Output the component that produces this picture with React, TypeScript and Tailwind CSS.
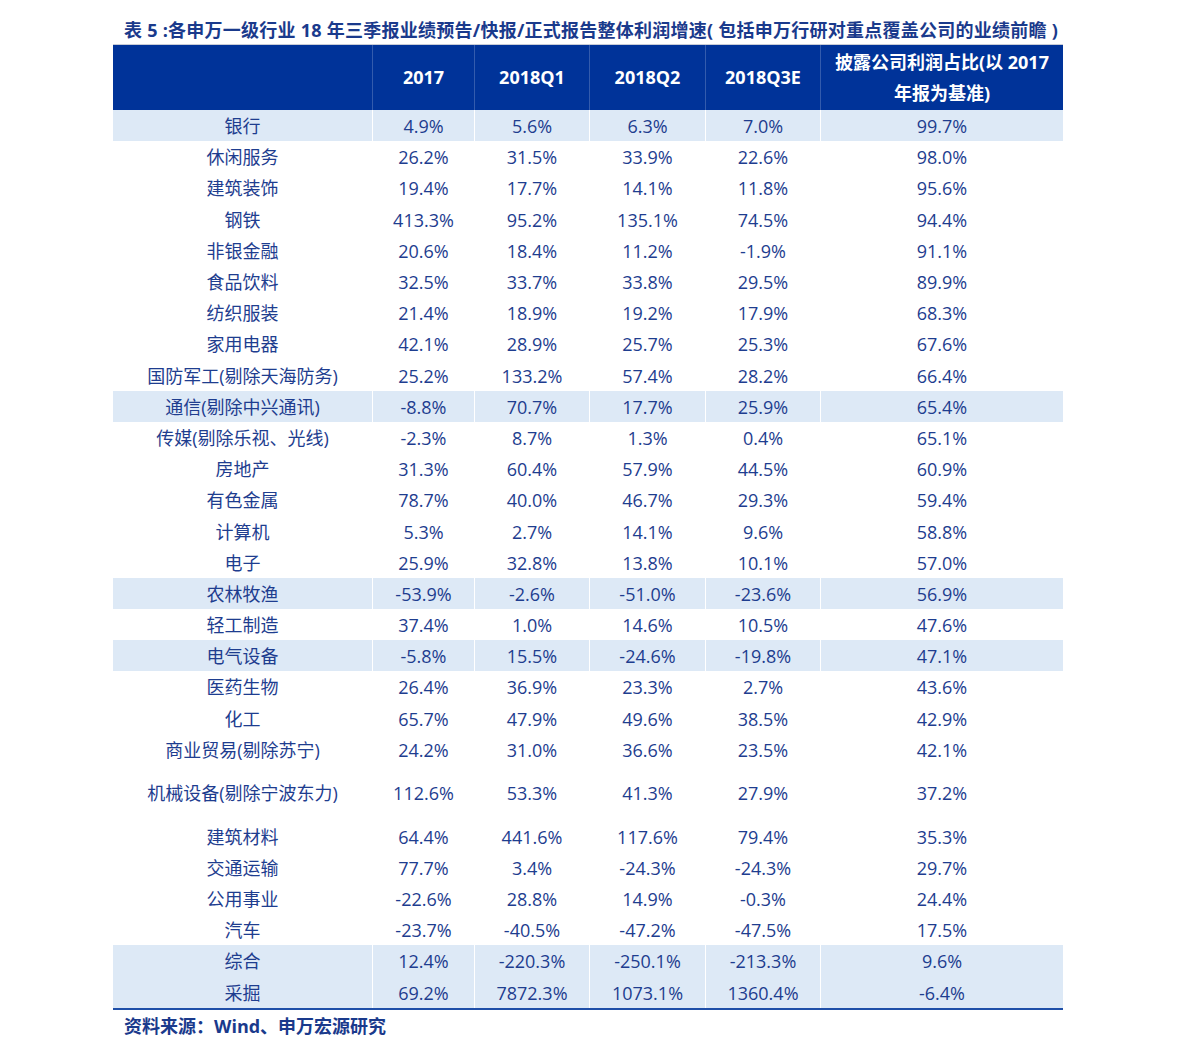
const rows: { name: string; v: string[]; hl?: boolean; tall?: boolean }[] = [
  { name: "银行", v: ["4.9%", "5.6%", "6.3%", "7.0%", "99.7%"], hl: true },
  { name: "休闲服务", v: ["26.2%", "31.5%", "33.9%", "22.6%", "98.0%"] },
  { name: "建筑装饰", v: ["19.4%", "17.7%", "14.1%", "11.8%", "95.6%"] },
  { name: "钢铁", v: ["413.3%", "95.2%", "135.1%", "74.5%", "94.4%"] },
  { name: "非银金融", v: ["20.6%", "18.4%", "11.2%", "-1.9%", "91.1%"] },
  { name: "食品饮料", v: ["32.5%", "33.7%", "33.8%", "29.5%", "89.9%"] },
  { name: "纺织服装", v: ["21.4%", "18.9%", "19.2%", "17.9%", "68.3%"] },
  { name: "家用电器", v: ["42.1%", "28.9%", "25.7%", "25.3%", "67.6%"] },
  { name: "国防军工(剔除天海防务)", v: ["25.2%", "133.2%", "57.4%", "28.2%", "66.4%"] },
  { name: "通信(剔除中兴通讯)", v: ["-8.8%", "70.7%", "17.7%", "25.9%", "65.4%"], hl: true },
  { name: "传媒(剔除乐视、光线)", v: ["-2.3%", "8.7%", "1.3%", "0.4%", "65.1%"] },
  { name: "房地产", v: ["31.3%", "60.4%", "57.9%", "44.5%", "60.9%"] },
  { name: "有色金属", v: ["78.7%", "40.0%", "46.7%", "29.3%", "59.4%"] },
  { name: "计算机", v: ["5.3%", "2.7%", "14.1%", "9.6%", "58.8%"] },
  { name: "电子", v: ["25.9%", "32.8%", "13.8%", "10.1%", "57.0%"] },
  { name: "农林牧渔", v: ["-53.9%", "-2.6%", "-51.0%", "-23.6%", "56.9%"], hl: true },
  { name: "轻工制造", v: ["37.4%", "1.0%", "14.6%", "10.5%", "47.6%"] },
  { name: "电气设备", v: ["-5.8%", "15.5%", "-24.6%", "-19.8%", "47.1%"], hl: true },
  { name: "医药生物", v: ["26.4%", "36.9%", "23.3%", "2.7%", "43.6%"] },
  { name: "化工", v: ["65.7%", "47.9%", "49.6%", "38.5%", "42.9%"] },
  { name: "商业贸易(剔除苏宁)", v: ["24.2%", "31.0%", "36.6%", "23.5%", "42.1%"] },
  { name: "机械设备(剔除宁波东力)", v: ["112.6%", "53.3%", "41.3%", "27.9%", "37.2%"], tall: true },
  { name: "建筑材料", v: ["64.4%", "441.6%", "117.6%", "79.4%", "35.3%"] },
  { name: "交通运输", v: ["77.7%", "3.4%", "-24.3%", "-24.3%", "29.7%"] },
  { name: "公用事业", v: ["-22.6%", "28.8%", "14.9%", "-0.3%", "24.4%"] },
  { name: "汽车", v: ["-23.7%", "-40.5%", "-47.2%", "-47.5%", "17.5%"] },
  { name: "综合", v: ["12.4%", "-220.3%", "-250.1%", "-213.3%", "9.6%"], hl: true },
  { name: "采掘", v: ["69.2%", "7872.3%", "1073.1%", "1360.4%", "-6.4%"], hl: true },
];

const cols = "grid grid-cols-[260px_102px_115px_116px_115px_242px]";

export default function App() {
  return (
    <div
      className="min-h-screen bg-white pt-[16px] pl-[113px]"
      style={{ fontFamily: '"Open Sans", "Noto Sans CJK SC", sans-serif' }}
    >
      <div className="w-[950px]">
        <h1 className="pl-[11px] h-[28px] text-[18px] leading-[28px] font-bold text-[#1a3a8c] whitespace-nowrap tracking-[0.25px]">
          表 5 :各申万一级行业 18 年三季报业绩预告/快报/正式报告整体利润增速( 包括申万行研对重点覆盖公司的业绩前瞻 )
        </h1>

        <div className="border-t border-[#c8ccd6]">
          <div className={`${cols} h-[65px] bg-[#003399] text-white font-bold text-[18px]`}>
            <div className="border-r border-white/20" />
            {["2017", "2018Q1", "2018Q2", "2018Q3E"].map((h) => (
              <div key={h} className="flex items-center justify-center border-r border-white/20">
                {h}
              </div>
            ))}
            <div className="flex flex-col items-center justify-center leading-[31px]">
              <span>披露公司利润占比(以 2017</span>
              <span>年报为基准)</span>
            </div>
          </div>

          <div className="border-b-2 border-[#1f4fa8]">
            {rows.map((r) => (
              <div
                key={r.name}
                className={`${cols} ${r.tall ? "h-[55.6px]" : "h-[31.2px]"} ${
                  r.hl ? "bg-[#dde9f6]" : "bg-white"
                } text-[18px] text-[#1e3d8f]`}
              >
                <div className="flex items-center justify-center pt-[2px] border-r border-white">{r.name}</div>
                {r.v.map((x, i) => (
                  <div
                    key={i}
                    className={`flex items-center justify-center pt-[2px] ${i < 4 ? "border-r border-white" : ""}`}
                  >
                    {x}
                  </div>
                ))}
              </div>
            ))}
          </div>
        </div>

        <p className="pl-[11px] mt-[1px] text-[18px] leading-[30px] font-bold text-[#1a3a8c]">
          资料来源：Wind、申万宏源研究
        </p>
      </div>
    </div>
  );
}
